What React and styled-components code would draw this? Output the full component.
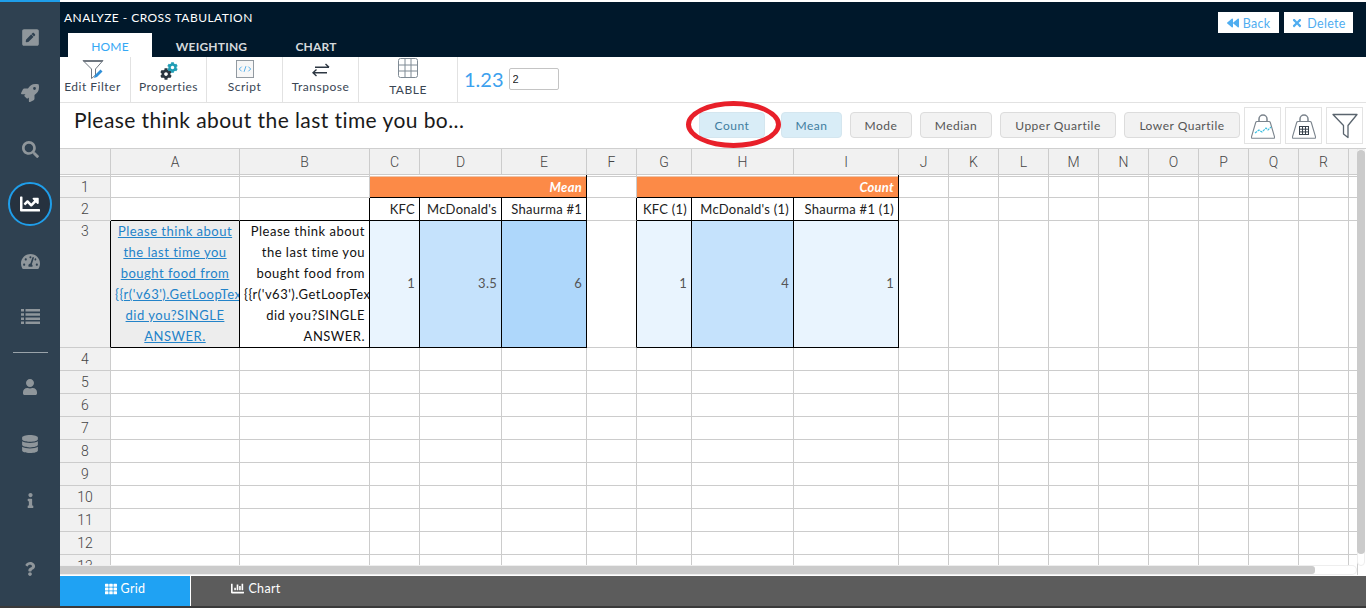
import React from "react";
import styled, { createGlobalStyle } from "styled-components";
import {
  FaPenSquare,
  FaRocket,
  FaSearch,
  FaChartLine,
  FaTachometerAlt,
  FaUser,
  FaDatabase,
  FaInfo,
  FaQuestion,
  FaBackward,
  FaTimes,
  FaTh,
  FaChartBar,
  FaCog
} from "react-icons/fa";

const GlobalStyle = createGlobalStyle`
  html, body {
    margin: 0;
    padding: 0;
    height: 100%;
    overflow: hidden;
    background: #fff;
  }
  body {
    font-family: "Lato", "Open Sans", sans-serif;
  }
`;

const Page = styled.div`
  display: flex;
  flex-direction: column;
  width: 1366px;
  height: 608px;
  position: relative;
`;

const Body = styled.div`
  display: flex;
  height: 606px;
`;

const Strip = styled.div`
  height: 2px;
  background: #3a3a3a;
`;

const Sidebar = styled.div`
  width: 60px;
  flex: none;
  display: flex;
  flex-direction: column;
  align-items: center;
  background: #2f4151;
  border-top: 2px solid #1f9eea;
  padding-top: 7px;
  box-sizing: border-box;
`;

const SideItem = styled.div`
  width: 60px;
  height: 56px;
  flex: none;
  display: flex;
  align-items: center;
  justify-content: center;
  color: #8f969b;
  font-size: ${(props) => props.size || 17}px;
  margin-top: ${(props) => props.top || 0}px;
`;

const ActiveCircle = styled.div`
  width: 40px;
  height: 40px;
  border-radius: 50%;
  border: 2px solid #1f9eea;
  background: #26323f;
  color: #fff;
  font-size: 20px;
  display: flex;
  align-items: center;
  justify-content: center;
`;

const SideDivider = styled.div`
  width: 35px;
  height: 1px;
  background: #9aa3aa;
  margin: 8px 0 6px;
  flex: none;
`;

const Main = styled.div`
  flex: 1;
  min-width: 0;
  display: flex;
  flex-direction: column;
  padding-top: 2px;
`;

const Header = styled.div`
  height: 55px;
  flex: none;
  background: #00182b;
  display: flex;
  justify-content: space-between;
  padding: 0 13px 0 4px;
`;

const HeaderLeft = styled.div`
  display: flex;
  flex-direction: column;
`;

const HeaderTitle = styled.div`
  color: #fff;
  font-size: 12px;
  line-height: 14px;
  margin-top: 9px;
  letter-spacing: 0.45px;
  height: 22px;
`;

const Tabs = styled.div`
  display: flex;
  margin-left: 4px;
`;

const Tab = styled.div`
  width: ${(props) => props.w}px;
  height: 24px;
  line-height: 28px;
  text-align: center;
  font-size: 12px;
  font-weight: ${(props) => (props.$active ? 400 : 700)};
  letter-spacing: 0.2px;
  color: ${(props) => (props.$active ? "#35a8f5" : "#d5d9dc")};
  background: ${(props) => (props.$active ? "#fff" : "transparent")};
`;

const HeaderButtons = styled.div`
  display: flex;
  gap: 5px;
  margin-top: 10px;
`;

const HeaderButton = styled.div`
  background: #fff;
  color: #4fadf0;
  height: 21px;
  box-sizing: border-box;
  padding-top: 1px;
  width: ${(props) => props.w}px;
  font-size: 12.5px;
  letter-spacing: 0.3px;
  display: flex;
  align-items: center;
  justify-content: center;
  gap: 4px;
`;

const Toolbar = styled.div`
  height: 45px;
  flex: none;
  display: flex;
  border-bottom: 1px solid #e2e2e2;
`;

const ToolItem = styled.div`
  width: ${(props) => props.w}px;
  flex: none;
  box-sizing: border-box;
  padding-right: ${(props) => props.shift || 0}px;
  border-right: 1px solid #e2e2e2;
  display: flex;
  flex-direction: column;
  align-items: center;
  justify-content: flex-start;
  color: #3a4654;
  font-size: 12px;
  letter-spacing: 0.5px;
  line-height: 14px;
`;

const ToolIcon = styled.div`
  height: 23px;
  box-sizing: border-box;
  padding-bottom: ${(props) => props.lift || 0}px;
  display: flex;
  align-items: flex-end;
  justify-content: center;
`;

const TableLabel = styled.span`
  margin-top: 3px;
`;

const DecimalBox = styled.div`
  display: flex;
  align-items: center;
  gap: 5px;
  padding: 0 0 0 6px;
  height: 44px;
`;

const DecimalLabel = styled.span`
  color: #3ca1ee;
  font-size: 20px;
`;

const DecimalInput = styled.input`
  width: 50px;
  height: 22px;
  box-sizing: border-box;
  border: 1px solid #c4c4c4;
  border-radius: 2px;
  padding: 0 3px;
  font-family: "Liberation Sans", sans-serif;
  font-size: 11px;
  color: #222;
  outline: none;
`;

const TitleRow = styled.div`
  height: 45px;
  flex: none;
  display: flex;
  align-items: flex-start;
  position: relative;
`;

const QuestionTitle = styled.div`
  width: 639px;
  flex: none;
  padding: 4px 0 0 14px;
  box-sizing: border-box;
  font-size: 21px;
  line-height: 26px;
  color: #1a1a1a;
  letter-spacing: 0.43px;
  white-space: nowrap;
`;

const StatGroup = styled.div`
  display: flex;
  gap: 8px;
  margin-top: 9px;
`;

const StatButton = styled.div`
  width: ${(props) => props.w}px;
  height: 26px;
  box-sizing: border-box;
  margin-right: ${(props) => props.gap || 0}px;
  border: 1px solid ${(props) => (props.$on ? "#d4e6ef" : "#dcdcdc")};
  border-radius: 4px;
  background: ${(props) => (props.$on ? "#d9edf7" : "#f2f2f2")};
  color: ${(props) => (props.$on ? "#3f7da0" : "#555")};
  font-size: 12px;
  letter-spacing: 0.5px;
  display: flex;
  align-items: center;
  justify-content: center;
`;

const BagGroup = styled.div`
  display: flex;
  gap: 4px;
  margin-top: 4px;
  margin-left: 4px;
`;

const BagBox = styled.div`
  width: 37px;
  height: 37px;
  box-sizing: border-box;
  border: 1px solid #e3e3e3;
  display: flex;
  align-items: center;
  justify-content: center;
`;

const RedRing = styled.div`
  position: absolute;
  left: 626px;
  top: -2px;
  width: 95px;
  height: 47px;
  box-sizing: border-box;
  border: 5px solid #e8202a;
  border-radius: 50%;
  pointer-events: none;
`;

const GridArea = styled.div`
  flex: 1;
  min-height: 0;
  position: relative;
  overflow: hidden;
  border-top: 1px solid #cfcfcf;
`;

const Sheet = styled.table`
  border-collapse: separate;
  border-spacing: 0;
  table-layout: fixed;
  width: 1297px;
  font-size: 13px;
  color: #222;
`;

const HeadCell = styled.th`
  height: 26px;
  padding: 0;
  background: #f1f1f1;
  border-right: 1px solid #ccc;
  border-bottom: 1px solid #ccc;
  font-family: "Roboto", sans-serif;
  font-weight: 300;
  font-size: 14px;
  color: #444;
  text-align: center;
  box-sizing: border-box;
`;

const RowHead = styled.td`
  padding: ${(props) => (props.$first ? "2px" : "0")} 0 0;
  height: ${(props) => props.h}px;
  box-sizing: border-box;
  background: #f1f1f1;
  border-right: 1px solid ${(props) => (props.$dark ? "#000" : "#ccc")};
  border-bottom: 1px solid #ccc;
  text-align: center;
  vertical-align: ${(props) => (props.$tall ? "top" : "middle")};
  color: #444;
  font-family: "Roboto", sans-serif;
  font-weight: 300;
  font-size: 14px;
  line-height: 20px;
  box-shadow: ${(props) => (props.$first ? "inset 0 1px 0 #fff, inset 0 2px 0 #ccc" : "none")};
`;

const Cell = styled.td`
  padding: 0 4px;
  height: ${(props) => props.h}px;
  box-sizing: border-box;
  overflow: hidden;
  white-space: nowrap;
  background: ${(props) => props.bg || "#fff"};
  color: ${(props) => props.color || "#222"};
  border-right: 1px solid ${(props) => (props.$r ? "#000" : "#ccc")};
  border-bottom: 1px solid ${(props) => (props.$b ? "#000" : "#ccc")};
  text-align: ${(props) => props.align || "right"};
  font-size: 13px;
  letter-spacing: 0.25px;
`;

const TopCell = styled(Cell)`
  box-shadow: inset 0 1px 0 #fff, inset 0 2px 0 #ccc;
`;

const OrangeCell = styled(Cell)`
  padding-top: 2px;
  background: #fc8a47;
  color: #fff;
  font-weight: 700;
  font-style: italic;
  box-shadow: inset 0 1px 0 #fff, inset 0 2px 0 #ecc4ab;
`;

const ValueCell = styled(Cell)`
  padding-bottom: 2px;
  color: #555;
`;

const QuestionText = styled.div`
  line-height: 21px;
  letter-spacing: 0.5px;
`;

const LoopLine = styled.div`
  white-space: nowrap;
  text-align: left;
`;

const QuestionLink = styled.a`
  color: #2383c9;
  text-decoration: underline;
`;

const HBar = styled.div`
  position: absolute;
  left: 0;
  bottom: 0;
  width: 1297px;
  height: 10px;
  box-sizing: border-box;
  border: 1px solid #eee;
  border-left: 0;
  border-radius: 0 5px 5px 0;
  background: #fff;
`;

const HThumb = styled.div`
  width: 1255px;
  height: 100%;
  background: #cbcbcb;
  border-radius: 0 3px 3px 0;
`;

const VBar = styled.div`
  position: absolute;
  top: 0;
  right: 1px;
  width: 8px;
  height: 417px;
  box-sizing: border-box;
  border: 1px solid #eee;
  border-radius: 0 0 4px 4px;
  background: #fff;
`;

const VThumb = styled.div`
  height: 404px;
  margin: 0 -1px;
  background: #cbcbcb;
  border-radius: 4px;
`;

const BottomTabs = styled.div`
  height: 30px;
  flex: none;
  display: flex;
  background: #5c5c5c;
  margin-top: 1px;
`;

const BottomTab = styled.div`
  width: 130px;
  flex: none;
  box-sizing: content-box;
  padding-bottom: 5px;
  height: 25px;
  display: flex;
  align-items: center;
  justify-content: center;
  gap: 4px;
  font-size: 12.5px;
  letter-spacing: 0.3px;
  color: #fff;
  background: ${(props) => (props.$active ? "#1fa2f3" : "transparent")};
  border-right: ${(props) => (props.$active ? "1px solid #fff" : "0")};
`;

const letters = "ABCDEFGHIJKLMNOPQRS".split("");
const widths = [129, 130, 50, 82, 85, 50, 55, 102, 105, 50, 50, 50, 50, 50, 50, 50, 50, 50, 9];

const ListIcon = () => (
  <svg width="19" height="17" viewBox="0 0 19 17" fill="#8f969b">
    <path d="M0 1h3v2.5H0zM4.5 1H19v2.5H4.5zM0 5.2h3v2.5H0zM4.5 5.2H19v2.5H4.5zM0 9.4h3v2.5H0zM4.5 9.4H19v2.5H4.5zM0 13.6h3v2.5H0zM4.5 13.6H19v2.5H4.5z" />
  </svg>
);

const FilterEditIcon = () => (
  <svg width="22" height="21" viewBox="0 0 22 21" fill="none">
    <path d="M1 1.5h20l-7.5 8.5v6l-4 3.5V10z" stroke="#6f7780" strokeWidth="1" />
    <path d="M1.5 2.5h19" stroke="#6f7780" strokeWidth="1" />
    <path d="M12 19l1-3 5.5-5.5 2 2L15 18z" fill="#2f8fd8" />
  </svg>
);

const CogsIcon = () => (
  <svg width="18" height="18" viewBox="0 0 18 18">
    <FaCog x="0" y="6" size="12" color="#29343f" />
    <FaCog x="7" y="0" size="11" color="#1f9db5" />
  </svg>
);

const ScriptIcon = () => (
  <svg width="18" height="18" viewBox="0 0 19 19" fill="none">
    <rect x="0.5" y="0.5" width="18" height="18" fill="#f7f7f7" stroke="#8d959c" />
    <path d="M6 7l-2.5 2.5L6 12M13 7l2.5 2.5L13 12" stroke="#3ba3e8" strokeWidth="0.9" />
    <path d="M10.5 6.5l-2 6" stroke="#3ba3e8" strokeWidth="0.9" />
  </svg>
);

const TransposeIcon = () => (
  <svg width="18" height="14" viewBox="0 0 18 14" fill="none" stroke="#2d3742" strokeWidth="1.4">
    <path d="M3 4.2h14M13.5 1l3.5 3.2" />
    <path d="M15 9.8H1M4.5 6.6L1 9.8l3.5 3.2" />
  </svg>
);

const TableIcon = () => (
  <svg width="20" height="20" viewBox="0 0 20 20" fill="none" stroke="#7f8a94" strokeWidth="1">
    <rect x="0.5" y="0.5" width="19" height="19" rx="2" />
    <path d="M7 .5v19M13 .5v19M.5 7h19M.5 13h19" />
  </svg>
);

const BagOutline = () => (
  <>
    <path d="M8 9V6a4 4 0 0 1 8 0v3" stroke="#7b848d" strokeWidth="1.5" fill="none" />
    <path d="M6 8.5h12q1 0 1.3 1L23.6 24q.3 1.2-1 1.2H1.4q-1.3 0-1-1.2L4.7 9.5q.3-1 1.3-1z" stroke="#7b848d" strokeWidth="1.1" fill="#fff" />
  </>
);

const BagChartIcon = () => (
  <svg width="24" height="26" viewBox="0 0 24 26">
    <BagOutline />
    <path d="M4 20l4-3 3 2 4-4 2 2 3-3" stroke="#3fc0e0" strokeWidth="1.2" strokeDasharray="2.5 0.8" fill="none" />
  </svg>
);

const BagTableIcon = () => (
  <svg width="24" height="26" viewBox="0 0 24 26">
    <BagOutline />
    <rect x="7.5" y="13.5" width="9" height="8" fill="#fff" stroke="#39434d" />
    <path d="M10.5 13.5v8M13.5 13.5v8M7.5 16.2h9M7.5 18.9h9" stroke="#39434d" strokeWidth="1" />
  </svg>
);

const FunnelIcon = () => (
  <svg width="26" height="26" viewBox="0 0 26 26" fill="none">
    <path d="M1 1.5h24L16 12.5v12l-4.5-3.5v-8.5z" stroke="#5a646e" strokeWidth="1.3" strokeLinejoin="round" />
  </svg>
);

const plain = (n) => <Cell key={n} h={23} />;

const restOfRow = (h, from = 9) =>
  letters.slice(from).map((l) => <Cell key={l} h={h} />);

const App = () => {
  const rows = [4, 5, 6, 7, 8, 9, 10, 11, 12, 13];

  return (
    <Page>
      <GlobalStyle />
      <Body>
        <Sidebar>
          <SideItem size={19}><FaPenSquare /></SideItem>
          <SideItem size={18}><FaRocket /></SideItem>
          <SideItem size={17}><FaSearch /></SideItem>
          <SideItem top={-1}>
            <ActiveCircle><FaChartLine /></ActiveCircle>
          </SideItem>
          <SideItem size={19} top={1}><FaTachometerAlt /></SideItem>
          <SideItem top={-1}><ListIcon /></SideItem>
          <SideDivider />
          <SideItem size={16}><FaUser /></SideItem>
          <SideItem size={18} top={1}><FaDatabase /></SideItem>
          <SideItem size={15}><FaInfo /></SideItem>
          <SideItem size={14} top={13}><FaQuestion /></SideItem>
        </Sidebar>
        <Main>
          <Header>
            <HeaderLeft>
              <HeaderTitle>ANALYZE - CROSS TABULATION</HeaderTitle>
              <Tabs>
                <Tab w={84} $active>HOME</Tab>
                <Tab w={119}>WEIGHTING</Tab>
                <Tab w={90}>CHART</Tab>
              </Tabs>
            </HeaderLeft>
            <HeaderButtons>
              <HeaderButton w={61}><FaBackward size={12} /> Back</HeaderButton>
              <HeaderButton w={69}><FaTimes size={12} /> Delete</HeaderButton>
            </HeaderButtons>
          </Header>
          <Toolbar>
            <ToolItem w={71} shift={5}>
              <ToolIcon><FilterEditIcon /></ToolIcon>
              Edit Filter
            </ToolItem>
            <ToolItem w={76}>
              <ToolIcon><CogsIcon /></ToolIcon>
              Properties
            </ToolItem>
            <ToolItem w={76}>
              <ToolIcon lift={2}><ScriptIcon /></ToolIcon>
              Script
            </ToolItem>
            <ToolItem w={76}>
              <ToolIcon lift={3}><TransposeIcon /></ToolIcon>
              Transpose
            </ToolItem>
            <ToolItem w={99}>
              <ToolIcon lift={2}><TableIcon /></ToolIcon>
              <TableLabel>TABLE</TableLabel>
            </ToolItem>
            <DecimalBox>
              <DecimalLabel>1.23</DecimalLabel>
              <DecimalInput defaultValue="2" />
            </DecimalBox>
          </Toolbar>
          <TitleRow>
            <QuestionTitle>Please think about the last time you bo...</QuestionTitle>
            <StatGroup>
              <StatButton w={66} gap={8} $on>Count</StatButton>
              <StatButton w={61} $on>Mean</StatButton>
              <StatButton w={62}>Mode</StatButton>
              <StatButton w={72}>Median</StatButton>
              <StatButton w={116}>Upper Quartile</StatButton>
              <StatButton w={116}>Lower Quartile</StatButton>
            </StatGroup>
            <BagGroup>
              <BagBox><BagChartIcon /></BagBox>
              <BagBox><BagTableIcon /></BagBox>
              <BagBox><FunnelIcon /></BagBox>
            </BagGroup>
            <RedRing />
          </TitleRow>
          <GridArea>
            <Sheet>
              <colgroup>
                <col style={{ width: 51 }} />
                {widths.map((w, i) => <col key={i} style={{ width: w }} />)}
              </colgroup>
              <thead>
                <tr>
                  <HeadCell />
                  {letters.map((l, i) => <HeadCell key={l}>{i < 18 ? l : ""}</HeadCell>)}
                </tr>
              </thead>
              <tbody>
                <tr>
                  <RowHead h={23} $first>1</RowHead>
                  <TopCell h={23} />
                  <TopCell h={23} />
                  <OrangeCell h={23} colSpan={3} $b $r>Mean</OrangeCell>
                  <TopCell h={23} />
                  <OrangeCell h={23} colSpan={3} $b $r>Count</OrangeCell>
                  {letters.slice(9).map((l) => <TopCell key={l} h={23} />)}
                </tr>
                <tr>
                  <RowHead h={23}>2</RowHead>
                  <Cell h={23} $b />
                  <Cell h={23} $r $b />
                  <Cell h={23} $r $b>KFC</Cell>
                  <Cell h={23} $r $b>McDonald's</Cell>
                  <Cell h={23} $r $b>Shaurma #1</Cell>
                  <Cell h={23} $r />
                  <Cell h={23} $r $b>KFC (1)</Cell>
                  <Cell h={23} $r $b>McDonald's (1)</Cell>
                  <Cell h={23} $r $b>Shaurma #1 (1)</Cell>
                  {restOfRow(23)}
                </tr>
                <tr>
                  <RowHead h={127} $dark $tall>3</RowHead>
                  <Cell h={127} $r $b bg="#ededed" align="center">
                    <QuestionText>
                      <QuestionLink>Please think about</QuestionLink><br />
                      <QuestionLink>the last time you</QuestionLink><br />
                      <QuestionLink>bought food from</QuestionLink>
                      <LoopLine><QuestionLink>{"{{r('v63').GetLoopText"}</QuestionLink></LoopLine>
                      <QuestionLink>did you?SINGLE</QuestionLink><br />
                      <QuestionLink>ANSWER.</QuestionLink>
                    </QuestionText>
                  </Cell>
                  <Cell h={127} $r $b color="#111">
                    <QuestionText>
                      Please think about<br />
                      the last time you<br />
                      bought food from
                      <LoopLine>{"{{r('v63').GetLoopText"}</LoopLine>
                      did you?SINGLE<br />
                      ANSWER.
                    </QuestionText>
                  </Cell>
                  <ValueCell h={127} $r $b bg="#e9f4fe">1</ValueCell>
                  <ValueCell h={127} $r $b bg="#c5e2fc">3.5</ValueCell>
                  <ValueCell h={127} $r $b bg="#aed7fb">6</ValueCell>
                  <Cell h={127} $r />
                  <ValueCell h={127} $r $b bg="#e9f4fe">1</ValueCell>
                  <ValueCell h={127} $r $b bg="#c5e2fc">4</ValueCell>
                  <ValueCell h={127} $r $b bg="#e9f4fe">1</ValueCell>
                  {restOfRow(127)}
                </tr>
                {rows.map((r) => (
                  <tr key={r}>
                    <RowHead h={23}>{r}</RowHead>
                    {letters.map(plain)}
                  </tr>
                ))}
              </tbody>
            </Sheet>
            <VBar><VThumb /></VBar>
            <HBar><HThumb /></HBar>
          </GridArea>
          <BottomTabs>
            <BottomTab $active><FaTh size={12} /> Grid</BottomTab>
            <BottomTab><FaChartBar size={13} /> Chart</BottomTab>
          </BottomTabs>
        </Main>
      </Body>
      <Strip />
    </Page>
  );
};

export default App;
